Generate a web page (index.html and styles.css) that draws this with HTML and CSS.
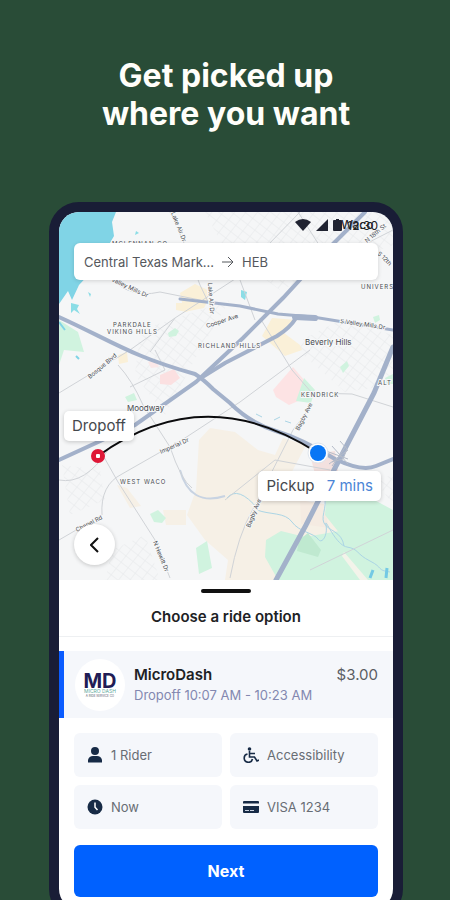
FILE: index.html
```html
<!DOCTYPE html>
<html lang="en">

<head>
    <meta charset="UTF-8" />
    <meta name="viewport" content="width=device-width, initial-scale=1.0" />
    <title>Get picked up where you want</title>
    <link rel="stylesheet" href="styles.css">
</head>

<body>
    <header>
        <h1>Get picked up<br>where you want</h1>
    </header>
    <main class="phone">
        <section class="map">
            <svg class="map-art" viewBox="59 212 334 368" preserveAspectRatio="xMidYMid slice" aria-hidden="true">
                <defs>
                    <pattern id="streets" width="9" height="8" patternUnits="userSpaceOnUse" patternTransform="rotate(38)">
                        <path d="M0 0H9M0 0V8" stroke="#e5e7ea" fill="none" />
                    </pattern>
                </defs>
                <rect x="59" y="212" width="334" height="368" fill="#f5f6f7" />
                <!-- street grids -->
                <g fill="url(#streets)">
                    <path d="M205 212H393V245L280 290 225 250Z" />
                    <path d="M292 345L340 320 393 335V385L345 392Z" />
                    <path d="M140 330L230 300 200 350 165 415 135 375Z" />
                    <path d="M62 465L100 470 105 500 70 515Z" />
                    <path d="M112 550L145 535 160 580H105Z" />
                    <path d="M375 480L393 475V505Z" />
                </g>
                <!-- land -->
                <g fill="#faf0d8">
                    <path d="M180 293L195 284 212 292 204 308 184 312Z" />
                    <path d="M176 303h14l-3 9-11-2z" />
                    <path d="M272 318L297 320 284 333 300 345 302 350 285 356 262 336Z" />
                    <path d="M118 355l9-3 1 10-9 2z" />
                </g>
                <g fill="#f6f0e6">
                    <path d="M199 440L210 428 235 432 258 450 275 455 283 438 306 445 285 485 300 500 340 525 320 580H225L228 560 205 540 187 515 196 490Z" />
                    <path d="M117 485l10 3 14 18-11 2z" />
                    <path d="M163 510h23v15h-20z" />
                    <path d="M208 438L225 440 226 462 205 450Z" />
                </g>
                <path d="M273 390L293 367 304 380 305 398 289 405 276 397Z" fill="#fde3e4" />
                <path d="M160 375l14-6 6 9-9 7-11-1z" fill="#fbe0e1" />
                <path d="M148 362l8-2 3 7-8 1z" fill="#fbe8e8" />
                <path d="M310 455l25-4 3 20-23 3z" fill="#f3e1df" />
                <path d="M300 500l24 4 5 24-28-4z" fill="#f5ebe2" />
                <g fill="#d0f3df">
                    <path d="M59 320L78 332 84 352 64 350 59 365Z" />
                    <path d="M266 540L281 531 305 537 318 552 345 540 325 515 326 498 365 495 393 510V580H278L265 557Z" />
                    <path d="M196 548L207 541 212 568 199 574Z" />
                    <path d="M150 514l8-4 8 8-4 5-8-1z" />
                    <path d="M168 333l7-5 4 3-3 5-7 1z" />
                    <path d="M125 397l9-4 3 7-9 2z" />
                    <path d="M304 378l11 12-4 13-15-2z" />
                    <path d="M340 367l7-6 2 5-6 7z" />
                    <path d="M373 317l6-2 1 5-5 3z" />
                    <path d="M385 378l8-4v10h-6z" />
                    <path d="M305 537L345 530 345 580H300Z" />
                </g>
                <path d="M299 540l9-7 13 17-3 7-21-6z" fill="#bfe9d0" />
                <path d="M344 552L368 580H360L342 556Z" fill="#f3f3ea" />
                <!-- water -->
                <path d="M59 212H116L112 222 114 236 107 248 93 270 79 285 72 300 68 291 59 304Z" fill="#80d4e6" />
                <path d="M71 303l8 2-2 4 3 5-6-4-3 3zM88 292l3 2-1 3zM139 233l-4 2 1-4zM241 290l6 2-2 8-4-3z" fill="#8bdde6" />
                <path d="M59 322l6 8M76 356l3 3" stroke="#80d4e6" stroke-width="2" />
                <g fill="none" stroke="#abd5e5">
                    <path d="M257 510C270 515 285 512 292 522S314 533 318 539 328 535 326 525 335 545 347 547 356 554 370 561 376 570 390 572" />
                    <path d="M322 490C330 504 320 515 324 523S342 531 344 546" />
                    <path d="M227 498Q238 485 258 509M256 414l6 3m12 3 6-3m5 4 6 2" />
                </g>
                <path d="M373 570l-3 8M387 568l-1 10" stroke="#73c9e4" stroke-width="3" />
                <path d="M180 470Q190 507 225 496" stroke="#c8d3e2" stroke-width="2" fill="none" />
                <!-- small roads -->
                <g fill="none" stroke="#d0d3d7">
                    <path d="M170 212L184 243 200 285 212 310 M260 318L292 370 312 393 352 394 393 407" />
                    <path d="M59 393L130 350 175 318 235 279 300 212" />
                    <path d="M100 450L118 482 155 540 170 578M59 540L102 515Q100 485 122 474L185 438 240 402 310 350" />
                    <path d="M118 365Q132 380 143 405L170 447Q181 480 192 488" />
                    <path d="M106 271Q125 300 160 292L225 305" />
                    <path d="M230 578Q238 535 253 509L293 430 312 405" />
                    <path d="M298 212L330 262 393 230M240 280L255 320" />
                    <path d="M155 350L165 370 130 387M175 318L150 352M59 480Q85 485 108 450" />
                    <path d="M225 500L275 460 330 470M310 570L393 530" />
                </g>
                <!-- highways -->
                <g fill="none" stroke="#a3b1ca" stroke-width="4" stroke-linecap="round">
                    <path d="M59 317C110 340 130 356 195 374Q203 379 213 389L230 403Q250 423 276 431T335 459Q362 472 376 466L393 459" />
                    <path d="M59 460L135 425 196 382 243 338 283 298 330 247 365 212" />
                    <path d="M204 376L225 363 277 336Q290 328 296 318" />
                    <path d="M180 299L240 306 278 314 313 317 393 330" stroke-width="3" />
                    <path d="M393 347L374 393 335 468 306 525 276 580" stroke-width="5" />
                    <path d="M295 317L315 318" stroke-width="6" />
                </g>
                <g fill="none" stroke="#b5bcc9">
                    <path d="M332 446l16 18M346 446l-14 20M326 451l22 8M329 464l19-14M340 441l7 8-4 10-11 3" />
                </g>
                <!-- place names -->
                <g class="places">
                    <text x="112" y="246">MCLENNAN CO</text>
                    <text x="113" y="327">PARKDALE</text>
                    <text x="107" y="334">VIKING HILLS</text>
                    <text x="198" y="348">RICHLAND HILLS</text>
                    <text x="361" y="289">UNIVERS</text>
                    <text x="301" y="397">KENDRICK</text>
                    <text x="378" y="385">ALT</text>
                    <text x="120" y="484">WEST WACO</text>
                </g>
                <g class="towns">
                    <text x="305" y="345">Beverly Hills</text>
                    <text x="127" y="411">Moodway</text>
                </g>
                <g class="roads">
                    <text transform="translate(171 213) rotate(68)">Lake Air Dr</text>
                    <text transform="translate(111 281) rotate(25)">Valley Mills Dr</text>
                    <text transform="translate(208 283) rotate(86)">Lake Air Dr</text>
                    <text transform="translate(207 328) rotate(-18)">Cooper Ave</text>
                    <text transform="translate(90 379) rotate(-40)">Bosque Blvd</text>
                    <text transform="translate(340 323) rotate(8)">S Valley Mills Dr</text>
                    <text transform="translate(367 243) rotate(-40)">N 18th St</text>
                    <text transform="translate(377 254) rotate(44)">S 12th</text>
                    <text transform="translate(299 431) rotate(-63)">Bagby Ave</text>
                    <text transform="translate(161 454) rotate(-24)">Imperial Dr</text>
                    <text transform="translate(77 532) rotate(-27)">Chapel Rd</text>
                    <text transform="translate(153 542) rotate(68)">N Hewitt Dr</text>
                    <text transform="translate(250 528) rotate(-68)">Bagby Ave</text>
                </g>
                <text class="city" x="341" y="229">Waco</text>
                <!-- route -->
                <path d="M98 456Q204 379 318 453" fill="none" stroke="#0b0b0d" stroke-width="2" />
                <circle cx="98" cy="456" r="5" fill="#df1837" stroke="#df1837" stroke-width="4" />
                <rect x="96" y="454" width="4" height="4" rx="1" fill="#fff" />
                <circle cx="318" cy="453" r="10" fill="#fff" stroke="#dfe5ed" />
                <circle cx="318" cy="453" r="8" fill="#0876f5" />
            </svg>
            <div class="status">
                <svg width="16" height="12" viewBox="0 0 16 12" aria-hidden="true"><path d="M0 3Q8-3 16 3L8 12Z" /></svg>
                <svg width="12" height="12" viewBox="0 0 12 12" aria-hidden="true"><path d="M12 0V12H0Z" /></svg>
                <svg width="9" height="12" viewBox="0 0 9 12" aria-hidden="true"><path d="M1 1H3V0H6V1H8Q9 1 9 2V11Q9 12 8 12H1Q0 12 0 11V2Q0 1 1 1Z" /></svg>
                <span>12:30</span>
            </div>
            <button class="trip">
                <span>Central Texas Mark...</span>
                <svg width="12" height="12" viewBox="0 0 12 12" aria-hidden="true"><path d="M0 6H11M6 1L11 6 6 11" /></svg>
                <span>HEB</span>
            </button>
            <div class="pin dropoff">Dropoff</div>
            <div class="pin pickup">Pickup <span>7 mins</span></div>
            <button class="back" aria-label="Back">
                <svg width="10" height="16" viewBox="0 0 10 16" aria-hidden="true"><path d="M8 1L1 8 8 15" /></svg>
            </button>
        </section>
        <section class="sheet">
            <div class="handle"></div>
            <h2>Choose a ride option</h2>
            <button class="ride">
                <svg class="logo" width="50" height="52" viewBox="0 0 50 52" aria-hidden="true">
                    <ellipse cx="25" cy="26" rx="25" ry="26" fill="#fff" />
                    <text class="logo-name" x="25" y="29">MD</text>
                    <text x="25" y="34">MICRO DASH</text>
                    <text class="logo-sub" x="25" y="38">A RIDE SERVICE CO</text>
                </svg>
                <span class="ride-text">
                    <strong>MicroDash</strong>
                    <span>Dropoff 10:07 AM - 10:23 AM</span>
                </span>
                <span class="price">$3.00</span>
            </button>
            <div class="options">
                <button>
                    <svg width="16" height="16" viewBox="0 0 16 16" aria-hidden="true"><circle cx="8" cy="4" r="4" /><path d="M1 15.500V13Q2 9 6 9H10Q14 9 15 13V15.500Z" /></svg>
                    1 Rider
                </button>
                <button>
                    <svg width="16" height="16" viewBox="0 0 16 16" aria-hidden="true"><circle cx="6.500" cy="2" r="1.800" /><path d="M6.500 4V10H11.500L14 14 16 13M7 6.500H12M4.500 7A4.200 4.200 0 1 0 9.500 12" fill="none" stroke="#172b46" stroke-width="1.600" /></svg>
                    Accessibility
                </button>
                <button>
                    <svg width="16" height="16" viewBox="0 0 16 16" aria-hidden="true"><circle cx="8" cy="8" r="7.500" /><path d="M8 3.500V8.200L10.500 11" fill="none" stroke="#fff" stroke-width="1.500" /></svg>
                    Now
                </button>
                <button>
                    <svg width="16" height="16" viewBox="0 0 16 16" aria-hidden="true"><path d="M0 3Q0 2 1 2H15Q16 2 16 3V4.500H0ZM0 7H16V13Q16 14 15 14H1Q0 14 0 13Z" /><path d="M2 11.500H6M7 11.500H11" stroke="#c9d2df" /></svg>
                    VISA 1234
                </button>
            </div>
            <button class="next">Next</button>
        </section>
    </main>
</body>

</html>
```
FILE: styles.css
```css
* {
    margin: 0;
    padding: 0;
    box-sizing: border-box;
    font-family: Inter, sans-serif;
}

body {
    background: #294c37;
    color: #202124;
    height: 100vh;
    overflow: hidden;
    padding: 57px 47px 0 49px;
}

header {
    margin-bottom: 69px;
    text-align: center;
    color: #fffefa;
}

h1 {
    font-size: 32px;
    line-height: 38px;
}

button {
    border: none;
    background: none;
    color: inherit;
    cursor: pointer;
}

.phone {
    border: 10px solid #191d36;
    border-radius: 30px;
    background: #191d36;
}

/* map */
.map {
    position: relative;
    aspect-ratio: 334 / 368;
    padding: 6px 15px 0;
    overflow: hidden;
    border-radius: 20px 20px 0 0;
}

.map-art {
    position: absolute;
    inset: 0;
    width: 100%;
    height: 100%;
}

.map-art text {
    fill: #484b50;
    stroke: #f7f8f9;
    stroke-width: 2px;
    paint-order: stroke;
}

.places {
    font-size: 6px;
    letter-spacing: 1px;
}

.towns {
    font-size: 8px;
}

.roads {
    font-size: 6px;
}

.map-art .city {
    font-size: 12px;
    font-weight: 500;
    fill: #26282c;
    stroke: none;
}

.status {
    position: relative;
    display: flex;
    justify-content: flex-end;
    align-items: center;
    gap: 5px;
    height: 14px;
    margin-bottom: 11px;
    font-size: 12px;
}

.status svg {
    fill: #202331;
}

.trip {
    position: relative;
    display: flex;
    align-items: center;
    gap: 8px;
    width: 100%;
    height: 37px;
    padding: 0 10px;
    border-radius: 6px;
    background: #fff;
    box-shadow: 0 1px 4px rgba(0, 0, 0, 0.15);
    color: #55585d;
    font-size: 13px;
}

.trip svg,
.back svg {
    fill: none;
    stroke: #55585d;
}

.pin {
    position: absolute;
    height: 30px;
    padding: 0 8px;
    border-radius: 5px;
    background: #fff;
    box-shadow: 0 1px 4px rgba(0, 0, 0, 0.2);
    color: #45484d;
    font-size: 15px;
    line-height: 30px;
}

.dropoff {
    left: 5px;
    top: 199px;
}

.pickup {
    right: 12px;
    top: 259px;
}

.pickup span {
    margin-left: 8px;
    color: #4b85d6;
}

.back {
    position: absolute;
    left: 15px;
    bottom: 15px;
    display: grid;
    place-items: center;
    width: 41px;
    height: 41px;
    border-radius: 50%;
    background: #fff;
    box-shadow: 0 1px 4px rgba(0, 0, 0, 0.2);
}

.back svg {
    stroke: #111;
    stroke-width: 2px;
}

/* ride options */
.sheet {
    padding: 9px 0 12px;
    border-radius: 0 0 20px 20px;
    background: #fff;
}

.handle {
    width: 50px;
    height: 4px;
    margin: 0 auto;
    border-radius: 2px;
    background: #111;
}

h2 {
    padding: 14px 0 9px;
    border-bottom: 1px solid #eef0f2;
    text-align: center;
    font-size: 15px;
    font-weight: 600;
    line-height: 20px;
}

.ride {
    display: flex;
    align-items: center;
    width: 100%;
    height: 67px;
    margin-top: 14px;
    padding: 0 15px 0 11px;
    border-left: 5px solid #0b5cff;
    background: #f5f7fb;
    text-align: left;
}

.logo text {
    fill: #61a99d;
    font-size: 5px;
    text-anchor: middle;
}

.logo .logo-name {
    fill: #211c55;
    font-size: 20px;
    font-weight: 700;
}

.logo .logo-sub {
    fill: #55596a;
    font-size: 3px;
}

.ride-text {
    display: flex;
    flex: 1;
    flex-direction: column;
    margin-left: 9px;
    color: #8388b0;
    font-size: 13px;
    line-height: 20px;
}

.ride-text strong {
    color: #202124;
    font-size: 15px;
    font-weight: 600;
}

.price {
    align-self: flex-start;
    margin-top: 14px;
    color: #5b5e63;
    font-size: 15px;
    line-height: 20px;
}

.options {
    display: grid;
    grid-template-columns: 1fr 1fr;
    gap: 8px;
    margin: 15px 15px 16px;
}

.options button {
    display: flex;
    align-items: center;
    gap: 8px;
    height: 44px;
    padding: 0 13px;
    border-radius: 6px;
    background: #f5f7fb;
    color: #686d74;
    font-size: 13px;
}

.options svg {
    fill: #172b46;
}

.next {
    display: block;
    width: calc(100% - 30px);
    height: 52px;
    margin: 0 15px;
    border-radius: 6px;
    background: #0061ff;
    color: #fff;
    font-size: 16px;
    font-weight: 700;
}
```
